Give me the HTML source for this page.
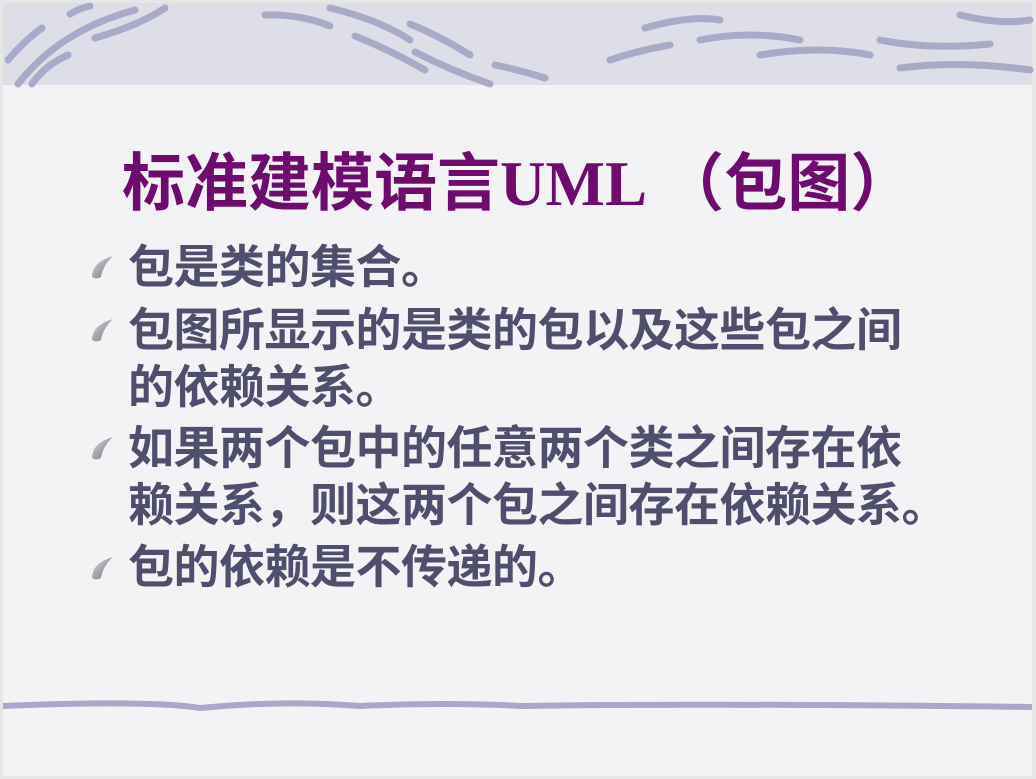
<!DOCTYPE html>
<html><head><meta charset="utf-8"><style>
body{margin:0;width:1036px;height:779px;background:#e6e6e6;overflow:hidden;position:relative;font-family:"Liberation Sans","Noto Sans CJK SC",sans-serif}
.slide{position:absolute;left:3px;top:3px;width:1029px;height:773px;background:#f3f3f5}
.band{position:absolute;left:3px;top:3px;width:1029px;height:82px;background:#dedee9}
.t{position:absolute;left:122px;top:134px;font-size:63px;font-weight:bold;color:#6e0c6e;white-space:nowrap;font-family:"Noto Sans CJK SC",sans-serif;line-height:90px}
.t span{font-family:"Liberation Serif",serif}
.l{position:absolute;left:128px;font-size:46px;font-weight:bold;color:#4f4f6d;white-space:nowrap;line-height:57px;font-family:"Noto Sans CJK SC",sans-serif;letter-spacing:-0.5px}
</style></head><body>
<div class="slide"></div>
<div class="band"></div>
<svg width="1036" height="779" style="position:absolute;left:0;top:0">
<g fill="none" stroke="#a9a9c8" stroke-linecap="round" stroke-width="7">
<path d="M8 60 Q25 40 42 28"/>
<path d="M18 84 Q60 30 135 10"/>
<path d="M32 84 Q45 65 68 55"/>
<path d="M70 14 Q80 8 90 6"/>
<path d="M95 38 Q140 25 165 8"/>
<path d="M265 15 Q300 14 330 26"/>
<path d="M330 8 Q380 20 410 40"/>
<path d="M355 36 Q390 50 425 70"/>
<path d="M410 24 Q440 36 470 55"/>
<path d="M415 52 Q450 70 490 84"/>
<path d="M495 65 Q520 70 545 78"/>
<path d="M610 60 Q640 50 670 45"/>
<path d="M645 28 Q690 15 720 20"/>
<path d="M700 40 Q750 30 800 40"/>
<path d="M760 55 Q820 45 870 55"/>
<path d="M880 40 Q930 50 990 44"/>
<path d="M900 68 Q960 60 1030 70"/>
<path d="M960 15 Q1000 25 1030 20"/>
</g>
<path d="M3 706 Q150 700 200 708 Q280 700 360 706 Q450 702 520 706 Q700 703 1032 707" stroke="#a8a8c8" stroke-width="6" fill="none"/>
<defs><linearGradient id="g" x1="0" y1="0" x2="1" y2="1"><stop offset="0" stop-color="#d8d8dc"/><stop offset="1" stop-color="#707078"/></linearGradient></defs>
<g fill="url(#g)">
<path d="M92 277 Q92 262 113 256 Q103 265 101 277 Q96 280 92 277 Z"/>
<path d="M92 340 Q92 325 113 319 Q103 328 101 340 Q96 343 92 340 Z"/>
<path d="M92 458 Q92 443 113 437 Q103 446 101 458 Q96 461 92 458 Z"/>
<path d="M92 578 Q92 563 113 557 Q103 566 101 578 Q96 581 92 578 Z"/>
</g>
</svg>
<div class="t">标准建模语言<span>UML</span> （包图）</div>
<div class="l" style="top:236px">包是类的集合。</div>
<div class="l" style="top:299px">包图所显示的是类的包以及这些包之间<br>的依赖关系。</div>
<div class="l" style="top:417px">如果两个包中的任意两个类之间存在依<br>赖关系，则这两个包之间存在依赖关系。</div>
<div class="l" style="top:536px">包的依赖是不传递的。</div>
</body></html>
